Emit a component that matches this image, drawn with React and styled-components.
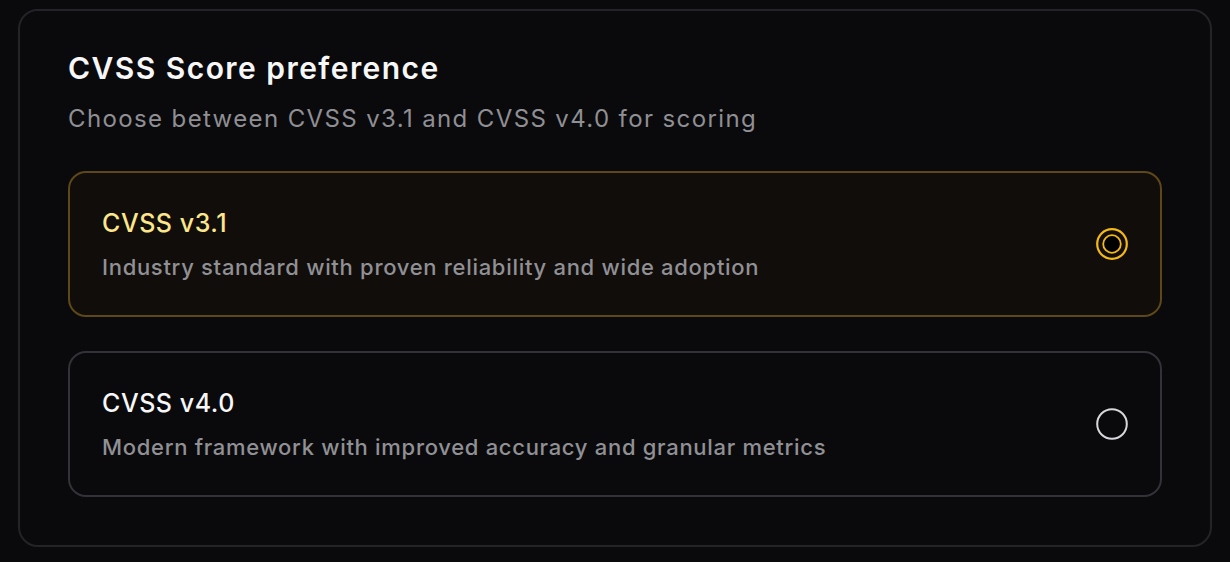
import React, { useState } from "react";
import styled, { createGlobalStyle } from "styled-components";

const Global = createGlobalStyle`
  html, body { margin: 0; padding: 0; background: #0a0a0c; }
  body { font-family: Inter, "Noto Sans", sans-serif; -webkit-font-smoothing: antialiased; }
  * { box-sizing: border-box; }
`;

const Page = styled.div`
  padding: 9px 18px 15px;
`;

const Card = styled.section`
  border: 2px solid #242428;
  border-radius: 20px;
  background: #0a0a0c;
  padding: 39px 48px 48px;
`;

const Title = styled.h2`
  margin: 0;
  font-size: 30px;
  line-height: 36px;
  font-weight: 600;
  color: #f7f7f8;
  letter-spacing: 1.45px;
`;

const Subtitle = styled.p`
  margin: 17px 0 0;
  font-size: 24px;
  line-height: 32px;
  font-weight: 400;
  color: #8f8f94;
  letter-spacing: 1.38px;
`;

const Options = styled.div`
  margin-top: 36px;
  display: flex;
  flex-direction: column;
  gap: 34px;
`;

const Option = styled.button`
  all: unset;
  display: flex;
  align-items: center;
  justify-content: space-between;
  padding: 34px 32px;
  border-radius: 18px;
  border: 2px solid ${(p) => (p.$selected ? "#5e4718" : "#323238")};
  background: ${(p) => (p.$selected ? "#100d0b" : "#0a0a0c")};
  cursor: pointer;
`;

const Texts = styled.div`
  display: flex;
  flex-direction: column;
  gap: 14px;
`;

const OptionTitle = styled.div`
  font-size: 25px;
  line-height: 32px;
  font-weight: 500;
  letter-spacing: 0.55px;
  color: ${(p) => (p.$selected ? "#fde68a" : "#f7f7f8")};
`;

const OptionDesc = styled.div`
  font-size: 22px;
  line-height: 28px;
  font-weight: 500;
  letter-spacing: 0.7px;
  color: #909095;
`;

const RadioWrap = styled.span`
  width: 32px;
  height: 32px;
  display: block;
  flex: none;
`;

function Radio({ selected }) {
  return (
    <RadioWrap>
      <svg width="32" height="32" viewBox="0 0 32 32">
        {selected ? (
          <>
            <circle cx="16" cy="16" r="14.8" fill="none" stroke="#f5b914" strokeWidth="2.2" />
            <circle cx="16" cy="16" r="8.8" fill="#000" stroke="#f5b914" strokeWidth="1.8" />
          </>
        ) : (
          <circle cx="16" cy="16" r="14.8" fill="none" stroke="#d8d8dc" strokeWidth="2" />
        )}
      </svg>
    </RadioWrap>
  );
}

const data = [
  { id: "3.1", title: "CVSS v3.1", desc: "Industry standard with proven reliability and wide adoption" },
  { id: "4.0", title: "CVSS v4.0", desc: "Modern framework with improved accuracy and granular metrics" },
];

export default function App() {
  const [value, setValue] = useState("3.1");
  return (
    <>
      <Global />
      <Page>
        <Card>
          <Title>CVSS Score preference</Title>
          <Subtitle>Choose between CVSS v3.1 and CVSS v4.0 for scoring</Subtitle>
          <Options>
            {data.map((o) => {
              const sel = value === o.id;
              return (
                <Option key={o.id} $selected={sel} onClick={() => setValue(o.id)}>
                  <Texts>
                    <OptionTitle $selected={sel}>{o.title}</OptionTitle>
                    <OptionDesc>{o.desc}</OptionDesc>
                  </Texts>
                  <Radio selected={sel} />
                </Option>
              );
            })}
          </Options>
        </Card>
      </Page>
    </>
  );
}
